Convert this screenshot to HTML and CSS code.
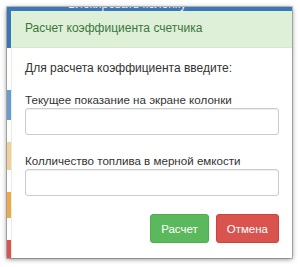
FILE: index.html
```html
<!DOCTYPE html>
<html lang="ru">
<head>
    <meta charset="UTF-8">
    <title>Расчет коэффициента счетчика</title>
    <link rel="stylesheet" href="styles.css">
</head>
<body>
    <div class="shot">
        <div class="behind-bar"><span>Блокировать колонку</span></div>
        <div class="shot-body">
            <div class="status-strip">
                <i class="s-blue" style="height: 37px"></i>
                <i style="height: 42px"></i>
                <i class="s-blue-light" style="height: 30px"></i>
                <i style="height: 22px"></i>
                <i class="s-orange-light" style="height: 28px"></i>
                <i style="height: 22px"></i>
                <i class="s-orange" style="height: 26px"></i>
                <i style="height: 22px"></i>
                <i class="s-red" style="height: 18px"></i>
            </div>
            <div class="modal">
                <div class="modal-header">Расчет коэффициента счетчика</div>
                <div class="modal-body">
                    <p class="intro">Для расчета коэффициента введите:</p>
                    <label for="current">Текущее показание на экране колонки</label>
                    <input class="form-control" id="current" type="text">
                    <label for="volume">Колличество топлива в мерной емкости</label>
                    <input class="form-control last" id="volume" type="text">
                </div>
                <div class="modal-footer">
                    <button class="btn btn-success">Расчет</button>
                    <button class="btn btn-danger">Отмена</button>
                </div>
            </div>
        </div>
    </div>
</body>
</html>
```

FILE: styles.css
```css
* {
    box-sizing: border-box;
}

body {
    margin: 0;
    padding: 7px;
    background: #fff;
    font-family: "Liberation Sans", Arial, sans-serif;
    font-size: 12px;
    color: #333;
}

.shot {
    width: 285px;
    height: 251px;
    overflow: hidden;
    background: #fff;
    box-shadow: 0 0 0 1px rgba(0, 0, 0, 0.2), 0 1px 5px rgba(0, 0, 0, 0.5);
}

/* полоса страницы под окном */
.behind-bar {
    height: 4px;
    overflow: hidden;
    background: #3a78b8;
    padding-left: 61px;
}

.behind-bar span {
    display: block;
    margin-top: -9px;
    line-height: 13px;
    color: #e8eef6;
    font-size: 12px;
}

.shot-body {
    display: flex;
    height: 247px;
}

.status-strip {
    width: 5px;
    display: flex;
    flex-direction: column;
    border-right: 1px solid #e3eedc;
}

.status-strip i {
    display: block;
    flex: none;
}

.s-blue { background: #3a75b5; }
.s-blue-light { background: #6a9ad0; }
.s-orange-light { background: #f3cf9c; }
.s-orange { background: #efa948; }
.s-red { background: #d9534f; }

.modal {
    flex: 1;
    background: #fff;
}

.modal-header {
    height: 37px;
    padding: 0 13px 2px;
    line-height: 34px;
    background: #dff0d8;
    color: #3c763d;
    border-bottom: 1px solid #d6e9c6;
    font-size: 12px;
}

.modal-body {
    padding: 12px 13px 0;
}

.intro {
    margin: 0 0 14px;
    line-height: 17px;
}

.modal-body label {
    display: block;
    line-height: 17px;
    font-size: 11.6px;
}

.form-control {
    display: block;
    width: 100%;
    height: 27px;
    margin: 0 0 17px;
    border: 1px solid #ccc;
    border-radius: 3px;
    box-shadow: inset 0 1px 1px rgba(0, 0, 0, 0.075);
    background: #fff;
}

.form-control.last {
    margin-bottom: 0;
}

.modal-footer {
    display: flex;
    justify-content: flex-end;
    gap: 7px;
    padding: 18px 13px 15px;
}

.btn {
    height: 29px;
    padding: 0 10px;
    border: 1px solid transparent;
    border-radius: 3px;
    color: #fff;
    font-family: inherit;
    font-size: 11.5px;
}

.btn-success {
    background: #5cb85c;
    border-color: #4cae4c;
}

.btn-danger {
    background: #d9534f;
    border-color: #d43f3a;
}
```
